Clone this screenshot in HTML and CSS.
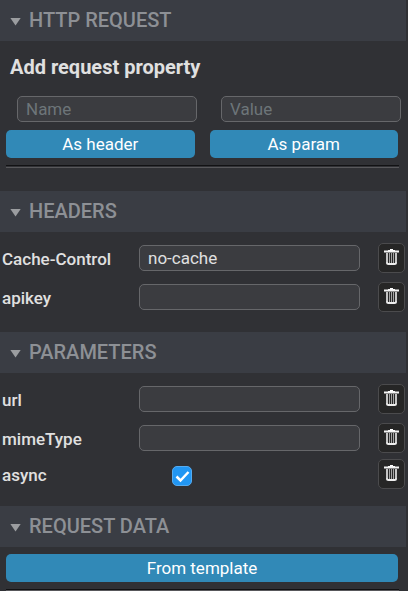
FILE: index.html
```html
<!DOCTYPE html>
<html lang="en">
<head>
<meta charset="utf-8">
<meta name="viewport" content="width=device-width, initial-scale=1">
<title>HTTP Request</title>
<link rel="stylesheet" href="styles.css">
</head>
<body>
<svg class="sprite" aria-hidden="true">
  <symbol id="trash" viewBox="0 0 15 17">
    <path d="M6 0h3v1h2v1H4V1h2z" fill="#fff"/>
    <path d="M0 1.500h15v2H0z" fill="#f4f4f4"/>
    <path d="M3 4v10M12 4v10" stroke="#c4c4c4" stroke-width="2"/>
    <path d="M5.500 4v10M7.500 4v10M9.500 4v10" stroke="#a4a4a4" stroke-width="1"/>
    <path d="M3 13.500q0 1.500 1.500 1.500h6q1.500 0 1.500-1.500" fill="none" stroke="#eee" stroke-width="2"/>
  </symbol>
</svg>
<main class="panel">
  <details class="section" open>
    <summary class="section-header">HTTP REQUEST</summary>
    <form class="add-property">
      <h2 class="title">Add request property</h2>
      <div class="fields">
        <input class="text-input" type="text" placeholder="Name" aria-label="Name">
        <input class="text-input" type="text" placeholder="Value" aria-label="Value">
      </div>
      <div class="actions">
        <button class="button" type="button">As header</button>
        <button class="button" type="button">As param</button>
      </div>
      <hr class="rule">
    </form>
  </details>

  <details class="section" open>
    <summary class="section-header">HEADERS</summary>
    <div class="rows">
      <div class="row">
        <label class="label" for="cache-control">Cache-Control</label>
        <input class="text-input" id="cache-control" type="text" value="no-cache">
        <button class="delete" type="button" aria-label="Delete Cache-Control"><svg class="icon"><use href="#trash"/></svg></button>
      </div>
      <div class="row">
        <label class="label" for="apikey">apikey</label>
        <input class="text-input" id="apikey" type="text">
        <button class="delete" type="button" aria-label="Delete apikey"><svg class="icon"><use href="#trash"/></svg></button>
      </div>
    </div>
  </details>

  <details class="section" open>
    <summary class="section-header">PARAMETERS</summary>
    <div class="rows">
      <div class="row">
        <label class="label" for="url">url</label>
        <input class="text-input" id="url" type="text">
        <button class="delete" type="button" aria-label="Delete url"><svg class="icon"><use href="#trash"/></svg></button>
      </div>
      <div class="row">
        <label class="label" for="mime-type">mimeType</label>
        <input class="text-input" id="mime-type" type="text">
        <button class="delete" type="button" aria-label="Delete mimeType"><svg class="icon"><use href="#trash"/></svg></button>
      </div>
      <div class="row row-check">
        <label class="label" for="async">async</label>
        <span class="check">
          <input class="checkbox" id="async" type="checkbox" checked>
          <svg class="tick" viewBox="0 0 20 20" aria-hidden="true"><path d="M4.500 10.500l4 4 8-8.500" fill="none" stroke="#fff" stroke-width="2.500"/></svg>
        </span>
        <button class="delete" type="button" aria-label="Delete async"><svg class="icon"><use href="#trash"/></svg></button>
      </div>
    </div>
  </details>

  <details class="section" open>
    <summary class="section-header">REQUEST DATA</summary>
    <div class="template">
      <button class="button" type="button">From template</button>
      <hr class="rule">
    </div>
  </details>
</main>
</body>
</html>
```
FILE: styles.css
```css
* {
  box-sizing: border-box;
}

html {
  background: #303135;
}

body {
  margin: 0;
  color: #e0e0e0;
  font: 17px/20px Roboto, sans-serif;
}

input,
button {
  margin: 0;
  font: inherit;
}

.sprite {
  position: absolute;
  width: 0;
  height: 0;
}

.panel {
  padding-right: 2px;
}

.section-header {
  display: flex;
  align-items: center;
  gap: 8px;
  padding: 8px 10px 9px;
  background: #3a3d44;
  color: #8d9095;
  font-size: 20px;
  font-weight: 500;
  line-height: 24px;
  list-style: none;
  cursor: pointer;
}

.section-header::-webkit-details-marker {
  display: none;
}

.section-header::before {
  content: "";
  width: 11px;
  height: 8px;
  margin-top: 3px;
  background: #9b9da0;
  clip-path: polygon(0 0, 100% 0, 50% 100%);
}

.add-property {
  padding: 14px 7px 23px 6px;
}

.title {
  margin: 0 4px 17px;
  font-size: 20px;
  font-weight: 700;
  line-height: 24px;
}

.fields,
.actions {
  display: grid;
  grid-template-columns: 1fr 1fr;
}

.fields {
  gap: 24px;
  margin: 0 -2px 8px 11px;
}

.actions {
  gap: 15px;
  margin-right: 1px;
}

.text-input {
  width: 100%;
  height: 26px;
  padding: 0 8px;
  border: 1px solid #66676a;
  border-radius: 5px;
  background: #3b3c40;
  color: #e0e0e0;
  outline: 0;
}

.text-input::placeholder {
  color: #6d7579;
  opacity: 1;
}

.button {
  height: 28px;
  padding: 0 8px;
  border: 0;
  border-radius: 5px;
  background: #3189b7;
  color: #fff;
}

.rule {
  height: 3px;
  margin: 7px 0 0;
  border: 0;
  border-top: 1px solid #121214;
  border-bottom: 1px solid #58585b;
}

.rows {
  padding: 6px 0 16px;
}

.row {
  display: grid;
  grid-template-columns: 119px minmax(0, 1fr) 27px;
  column-gap: 18px;
  align-items: center;
  height: 39px;
  padding: 0 1px 0 2px;
}

.row-check {
  height: 33px;
}

.label {
  padding-top: 3px;
  font-weight: 500;
}

.delete {
  display: grid;
  place-items: center;
  height: 30px;
  padding: 0;
  border: 1px solid #4b4b4d;
  border-radius: 5px;
  background: #262626;
}

.icon {
  width: 15px;
  height: 17px;
}

.check {
  position: relative;
  width: 20px;
  height: 20px;
  margin: 4px 0 0 33px;
}

.checkbox {
  display: block;
  width: 20px;
  height: 20px;
  appearance: none;
  border: 1px solid #55abf0;
  border-radius: 5px;
  background: #2196f3;
}

.tick {
  position: absolute;
  inset: 0;
  pointer-events: none;
}

.checkbox:not(:checked) + .tick {
  display: none;
}

.template {
  padding: 7px 7px 0 6px;
}

.template .button {
  display: block;
  width: calc(100% - 1px);
}

.template .rule {
  height: 2px;
}
```
